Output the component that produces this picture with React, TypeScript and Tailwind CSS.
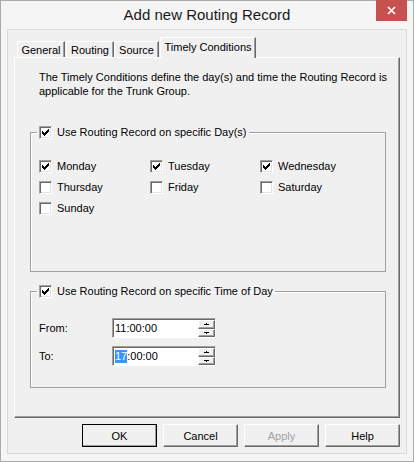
import type { ReactNode } from 'react';

const days = [
  { label: 'Monday', checked: true },
  { label: 'Tuesday', checked: true },
  { label: 'Wednesday', checked: true },
  { label: 'Thursday', checked: false },
  { label: 'Friday', checked: false },
  { label: 'Saturday', checked: false },
  { label: 'Sunday', checked: false },
];

// classic 7x7 pixel check glyph, one 3px run per column
function CheckGlyph() {
  return (
    <svg width="7" height="7" viewBox="0 0 7 7" shapeRendering="crispEdges">
      <path
        d="M0 2h1v3H0z M1 3h1v3H1z M2 4h1v3H2z M3 3h1v3H3z M4 2h1v3H4z M5 1h1v3H5z M6 0h1v3H6z"
        fill="#000"
      />
    </svg>
  );
}

function CheckBox({ checked }: { checked: boolean }) {
  return (
    <span className="w-[13px] h-[13px] shrink-0 flex items-center justify-center bg-white border border-t-[#a0a0a0] border-l-[#a0a0a0] border-b-white border-r-white shadow-[inset_1px_1px_0_#696969,inset_-1px_-1px_0_#e3e3e3]">
      {checked && <CheckGlyph />}
    </span>
  );
}

function SpinButton({ up }: { up: boolean }) {
  return (
    <div className="h-[9px] flex items-center justify-center bg-[#f0f0f0] border border-t-white border-l-white border-b-[#696969] border-r-[#696969] shadow-[inset_-1px_-1px_0_#a0a0a0]">
      <svg width="5" height="3" viewBox="0 0 5 3" shapeRendering="crispEdges">
        {up ? (
          <path d="M2 0h1v1H2z M0 1h5v1H0z" fill="#000" />
        ) : (
          <path d="M0 1h5v1H0z M2 2h1v1H2z" fill="#000" />
        )}
      </svg>
    </div>
  );
}

function TimeField({ children }: { children: ReactNode }) {
  return (
    <div className="w-[104px] h-[20px] flex bg-white border border-t-[#a0a0a0] border-l-[#a0a0a0] border-b-white border-r-white shadow-[inset_1px_1px_0_#696969]">
      <div className="flex-1 pl-[2px] pt-[1px] flex items-center leading-[13px]">{children}</div>
      <div className="w-[17px] pt-[1px] flex flex-col">
        <SpinButton up />
        <SpinButton up={false} />
      </div>
    </div>
  );
}

function PushButton({ label, primary, disabled }: { label: string; primary?: boolean; disabled?: boolean }) {
  return (
    <button
      className={`w-[75px] h-[23px] flex items-center justify-center bg-[#f0f0f0] ${
        primary ? 'outline outline-1 outline-[#000] -outline-offset-1' : ''
      } border border-t-white border-l-white border-b-[#696969] border-r-[#696969] shadow-[inset_-1px_-1px_0_#a0a0a0] ${
        disabled ? 'text-[#a0a0a0]' : 'text-black'
      }`}
    >
      {label}
    </button>
  );
}

function Tab({ label, selected, className }: { label: string; selected?: boolean; className: string }) {
  return (
    <div
      className={`${className} flex items-center justify-center bg-[#f0f0f0] border-t border-l border-t-white border-l-white border-r border-r-[#696969] shadow-[inset_-1px_0_0_#a0a0a0] ${
        selected ? 'h-[21px] relative z-10 pb-[3px]' : 'h-[17px]'
      }`}
    >
      {label}
    </div>
  );
}

export default function App() {
  return (
    <div className="w-[414px] h-[462px] flex flex-col bg-[#f5f5f5] border border-[#ababab] text-[11px] leading-[14px] text-black font-['Liberation_Sans',Arial,sans-serif]">
      {/* Title bar */}
      <div className="h-[28px] relative flex items-center justify-center">
        <span className="text-[15px] text-[#1a1a1a] pb-[1px]">Add new Routing Record</span>
        <div className="absolute right-[6px] -top-[1px] w-[31px] h-[21px] bg-[#c75050] flex items-center justify-center">
          <svg width="9" height="9" viewBox="0 0 9 9">
            <path d="M1 1l7 7M8 1l-7 7" stroke="#fff" strokeWidth="1.7" />
          </svg>
        </div>
      </div>

      {/* Client area */}
      <div className="mx-[6px] h-[425px] border border-[#dadada] bg-[#f0f0f0] px-[6px] pt-[7px] flex flex-col">
        {/* Tab strip */}
        <div className="flex items-end pl-[3px] -mb-[1px]">
          <Tab label="General" className="w-[48px]" />
          <Tab label="Routing" className="w-[48px] ml-[1px]" />
          <Tab label="Source" className="w-[45px]" />
          <Tab label="Timely Conditions" selected className="w-[96px] ml-[1px]" />
        </div>

        {/* Tab page */}
        <div className="h-[361px] bg-[#f0f0f0] border border-t-white border-l-white border-b-[#696969] border-r-[#696969] shadow-[inset_-1px_-1px_0_#a0a0a0] px-[15px] pt-[12px]">
          <p className="pl-[9px] w-[366px]">
            The Timely Conditions define the day(s) and time the Routing Record is applicable for the Trunk Group.
          </p>

          <fieldset className="mt-[28px] w-[356px] h-[146px] border border-[#a0a0a0] shadow-[inset_1px_1px_0_#fff] pl-[6px]">
            <legend className="px-[2px] flex items-center gap-[5px] leading-[13px]">
              <CheckBox checked />
              <span>Use Routing Record on specific Day(s)</span>
            </legend>
            <div className="pl-[2px] pt-[21px] grid grid-cols-[111px_110px_1fr] gap-y-[8px]">
              {days.map((d) => (
                <div key={d.label} className="flex items-center gap-[5px] leading-[13px]">
                  <CheckBox checked={d.checked} />
                  <span>{d.label}</span>
                </div>
              ))}
            </div>
          </fieldset>

          <fieldset className="mt-[13px] w-[356px] h-[103px] border border-[#a0a0a0] shadow-[inset_1px_1px_0_#fff] pl-[6px]">
            <legend className="px-[2px] flex items-center gap-[5px] leading-[13px]">
              <CheckBox checked />
              <span>Use Routing Record on specific Time of Day</span>
            </legend>
            <div className="pl-[2px] pt-[20px] flex flex-col gap-[8px]">
              <div className="flex items-center">
                <span className="w-[73px]">From:</span>
                <TimeField>
                  <span>11:00:00</span>
                </TimeField>
              </div>
              <div className="flex items-center">
                <span className="w-[73px]">To:</span>
                <TimeField>
                  <span className="bg-[#3399ff] text-white">17</span>
                  <span>:00:00</span>
                </TimeField>
              </div>
            </div>
          </fieldset>
        </div>

        {/* Dialog buttons */}
        <div className="mt-[6px] flex justify-end gap-[6px]">
          <PushButton label="OK" primary />
          <PushButton label="Cancel" />
          <PushButton label="Apply" disabled />
          <PushButton label="Help" />
        </div>
      </div>
    </div>
  );
}
